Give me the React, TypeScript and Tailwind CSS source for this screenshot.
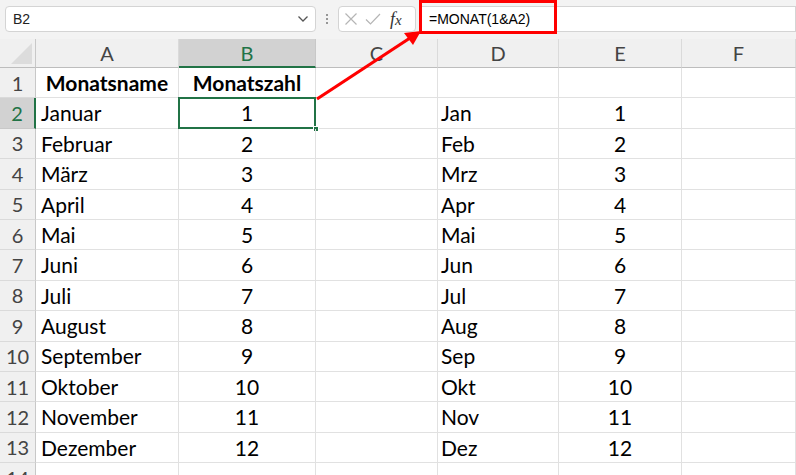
import React from "react";

const rows: [string, string, string, string][] = [
  ["Januar", "1", "Jan", "1"],
  ["Februar", "2", "Feb", "2"],
  ["März", "3", "Mrz", "3"],
  ["April", "4", "Apr", "4"],
  ["Mai", "5", "Mai", "5"],
  ["Juni", "6", "Jun", "6"],
  ["Juli", "7", "Jul", "7"],
  ["August", "8", "Aug", "8"],
  ["September", "9", "Sep", "9"],
  ["Oktober", "10", "Okt", "10"],
  ["November", "11", "Nov", "11"],
  ["Dezember", "12", "Dez", "12"],
];

const cols = ["A", "B", "C", "D", "E", "F"];
const gridCols = "grid grid-cols-[36px_143px_137px_122px_121px_123px_1fr]";

function Cell({ children, className = "" }: { children?: React.ReactNode; className?: string }) {
  return (
    <div className={`h-[30.4px] border-r border-b border-[#e1e1e1] flex items-center text-[21px] text-black overflow-visible whitespace-nowrap ${className}`}>
      {children}
    </div>
  );
}

function RowHead({ n, active }: { n: number; active?: boolean }) {
  return (
    <div
      className={`h-[30.4px] border-b flex items-center justify-center text-[20px] ${
        active
          ? "bg-[#d2d2d2] text-[#217346] border-r-2 border-r-[#217346] border-b-[#c8c8c8]"
          : "bg-[#f0f0f0] text-[#444] border-r border-r-[#c8c8c8] border-b-[#dadada]"
      }`}
    >
      {n}
    </div>
  );
}

export default function App() {
  return (
    <div className="w-[796px] h-[475px] overflow-hidden bg-white relative font-['Lato',sans-serif]">
      {/* Formula bar */}
      <div className="h-[39px] bg-[#f3f3f3] flex items-start pt-[6px] pl-[5px] font-['Liberation_Sans',sans-serif]">
        <div className="w-[311px] h-[26px] bg-white border border-[#d4d4d4] rounded-[4px] flex items-center justify-between pl-[7px] pr-[6px]">
          <span className="text-[14px] text-[#222]">B2</span>
          <svg width="12" height="8" viewBox="0 0 12 8">
            <path d="M1.5 1.5 L6 6 L10.5 1.5" fill="none" stroke="#555" strokeWidth="1.3" />
          </svg>
        </div>
        <div className="w-[22px] h-[26px] flex flex-col items-center justify-center gap-[2px]">
          <span className="w-[2px] h-[2px] bg-[#777] rounded-full" />
          <span className="w-[2px] h-[2px] bg-[#777] rounded-full" />
          <span className="w-[2px] h-[2px] bg-[#777] rounded-full" />
        </div>
        <div className="w-[78px] h-[26px] bg-white border border-[#d4d4d4] rounded-[4px] flex items-center pl-[5px] gap-[7px]">
          <svg width="14" height="14" viewBox="0 0 14 14">
            <path d="M1.5 1.5 L12.5 12.5 M12.5 1.5 L1.5 12.5" stroke="#b5b5b5" strokeWidth="1.2" />
          </svg>
          <svg width="16" height="14" viewBox="0 0 16 14">
            <path d="M1 7.5 L5.5 12 L15 2" fill="none" stroke="#b5b5b5" strokeWidth="1.2" />
          </svg>
          <span className="font-['Liberation_Serif',serif] italic text-[18px] text-[#333] leading-none ml-[2px]">
            f<span className="text-[15px]">x</span>
          </span>
        </div>
        <div className="flex-1 h-[26px] ml-[3px] bg-white border border-[#d4d4d4] flex items-center pl-[9px]">
          <span className="text-[14px] text-black">=MONAT(1&amp;A2)</span>
        </div>
      </div>

      {/* Column headers */}
      <div className={gridCols}>
        <div className="h-[29px] bg-[#f0f0f0] border-r border-r-[#c8c8c8] border-b border-b-[#bdbdbd] relative">
          <div className="absolute right-[3px] bottom-[3px] w-0 h-0 border-l-[21px] border-l-transparent border-b-[21px] border-b-[#dcdcdc]" />
        </div>
        {cols.map((c) => (
          <div
            key={c}
            className={`h-[29px] flex items-center justify-center text-[20px] border-r ${
              c === "B"
                ? "bg-[#d2d2d2] text-[#217346] border-b-2 border-b-[#217346] border-r-[#c8c8c8]"
                : "bg-[#f0f0f0] text-[#444] border-b border-b-[#bdbdbd] border-r-[#dadada]"
            }`}
          >
            {c}
          </div>
        ))}
      </div>

      {/* Body */}
      <div className={gridCols}>
        <RowHead n={1} />
        <Cell className="justify-center font-bold">Monatsname</Cell>
        <Cell className="justify-center font-bold">Monatszahl</Cell>
        <Cell />
        <Cell />
        <Cell />
        <Cell />
        {rows.map((r, i) => (
          <React.Fragment key={i}>
            <RowHead n={i + 2} active={i === 0} />
            <Cell className="pl-[5px]">{r[0]}</Cell>
            <Cell className="justify-center relative">
              {r[1]}
              {i === 0 && (
                <>
                  <div className="absolute left-[-1px] top-[-1px] right-[-1px] bottom-[-1px] border-2 border-[#217346]" />
                  <div className="absolute right-[-4px] bottom-[-4px] w-[6px] h-[6px] bg-[#217346] border border-white" />
                </>
              )}
            </Cell>
            <Cell />
            <Cell className="pl-[3px]">{r[2]}</Cell>
            <Cell className="justify-center">{r[3]}</Cell>
            <Cell />
          </React.Fragment>
        ))}
        <RowHead n={14} />
        <Cell />
        <Cell />
        <Cell />
        <Cell />
        <Cell />
        <Cell />
      </div>

      {/* Annotation: red box */}
      <div className="absolute left-[419px] top-0 w-[138px] h-[34px] border-[3px] border-[#ff0000]" />
      {/* Annotation: arrow */}
      <svg className="absolute left-0 top-0 pointer-events-none" width="796" height="475">
        <line x1="317" y1="99" x2="410" y2="38" stroke="#ff0000" strokeWidth="3.2" />
        <polygon points="421,31 404,33 413,45" fill="#ff0000" />
      </svg>
    </div>
  );
}
